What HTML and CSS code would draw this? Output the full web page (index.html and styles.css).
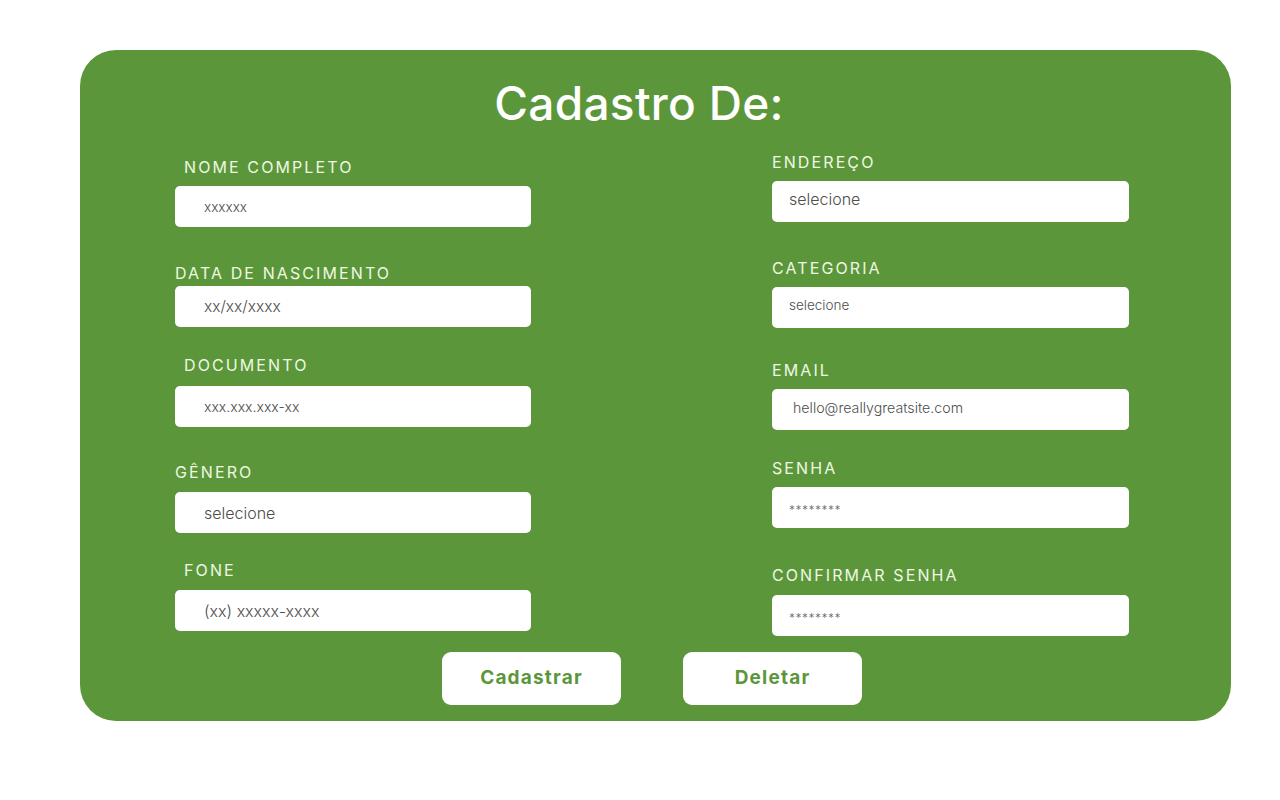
FILE: index.html
```html
<!DOCTYPE html>
<html lang="pt-BR">
<head>
<meta charset="utf-8">
<title>Cadastro De:</title>
<link rel="stylesheet" href="styles.css">
</head>
<body>
<main class="card">
  <h1 class="title">Cadastro De:</h1>
  <div class="grid">
    <div class="col col-left">
      <div class="field f-nome"><span class="label indent">NOME COMPLETO</span><div class="input pad-l t-xs">xxxxxx</div></div>
      <div class="field f-data"><span class="label">DATA DE NASCIMENTO</span><div class="input pad-l t-sm">xx/xx/xxxx</div></div>
      <div class="field f-doc"><span class="label indent">DOCUMENTO</span><div class="input pad-l t-doc">xxx.xxx.xxx-xx</div></div>
      <div class="field f-gen"><span class="label">GÊNERO</span><div class="input pad-l t-md">selecione</div></div>
      <div class="field f-fone"><span class="label indent">FONE</span><div class="input pad-l t-md">(xx) xxxxx-xxxx</div></div>
    </div>
    <div class="col col-right">
      <div class="field f-end"><span class="label">ENDEREÇO</span><div class="input pad-r t-md raise">selecione</div></div>
      <div class="field f-cat"><span class="label">CATEGORIA</span><div class="input pad-r t-xs raise">selecione</div></div>
      <div class="field f-mail"><span class="label">EMAIL</span><div class="input pad-r2 t-mail raise">hello@reallygreatsite.com</div></div>
      <div class="field f-senha"><span class="label">SENHA</span><div class="input pad-r t-star">********</div></div>
      <div class="field f-conf"><span class="label">CONFIRMAR SENHA</span><div class="input pad-r t-star">********</div></div>
    </div>
  </div>
  <div class="actions">
    <button class="btn">Cadastrar</button>
    <button class="btn">Deletar</button>
  </div>
</main>
</body>
</html>
```
FILE: styles.css
```css
* { box-sizing: border-box; }
html, body { margin: 0; background: #ffffff; }
body { font-family: "Inter", "Liberation Sans", sans-serif; }

.card {
  margin: 50px 0 0 80px;
  width: 1151px;
  height: 671px;
  background: #5c963a;
  border-radius: 36px;
  padding: 23px 102px 0 95px;
  display: flex;
  flex-direction: column;
}

.title {
  margin: 0;
  height: 60px;
  line-height: 60px;
  text-align: center;
  color: #ffffff;
  font-size: 46px;
  font-weight: 500;
  letter-spacing: 0.3px;
  padding-right: 26px;
}

.grid {
  margin-top: 19px;
  display: grid;
  grid-template-columns: 356px 357px;
  column-gap: 241px;
  align-items: start;
}

.col { display: flex; flex-direction: column; }
.col-left { padding-top: 5px; }

.field { display: flex; flex-direction: column; }
.label {
  display: block;
  height: 20px;
  line-height: 20px;
  font-size: 16px;
  letter-spacing: 2.1px;
  color: #eef8e2;
  margin-bottom: 9px;
  white-space: nowrap;
}
.label.indent { padding-left: 9px; }

.f-data { margin-top: 36px; }
.f-data .label { margin-bottom: 3px; }
.f-doc { margin-top: 28px; }
.f-doc .label { margin-bottom: 11px; }
.f-gen { margin-top: 35px; }
.f-gen .label { margin-bottom: 10px; }
.f-fone { margin-top: 27px; }
.f-fone .label { margin-bottom: 10px; }

.f-cat { margin-top: 36px; }
.f-mail { margin-top: 32px; }
.f-senha { margin-top: 28px; }
.f-conf { margin-top: 37px; }
.f-conf .label { margin-bottom: 10px; }

.input {
  height: 41px;
  background: #ffffff;
  border-radius: 5px;
  display: flex;
  align-items: center;
  color: #4d4d4d;
  font-weight: 300;
  white-space: nowrap;
}
.pad-l { padding-left: 29px; }
.pad-r { padding-left: 17px; }
.pad-r2 { padding-left: 21px; }
.raise { padding-bottom: 5px; }

.t-xs { font-size: 13.5px; }
.t-sm { font-size: 15.5px; }
.t-doc { font-size: 14px; }
.t-md { font-size: 16px; }
.t-mail { font-size: 14.2px; }
.t-star { font-size: 12px; letter-spacing: 0.5px; padding-top: 3px; color: #666; }

.actions {
  margin-top: 16px;
  display: flex;
  justify-content: center;
  gap: 62px;
}

.btn {
  width: 179px;
  height: 53px;
  border: none;
  border-radius: 9px;
  background: #ffffff;
  color: #5c963a;
  font-family: "Inter", "Liberation Sans", sans-serif;
  font-size: 19px;
  font-weight: 700;
  letter-spacing: 1.2px;
  padding: 0 0 3px 0;
  cursor: pointer;
}
```
